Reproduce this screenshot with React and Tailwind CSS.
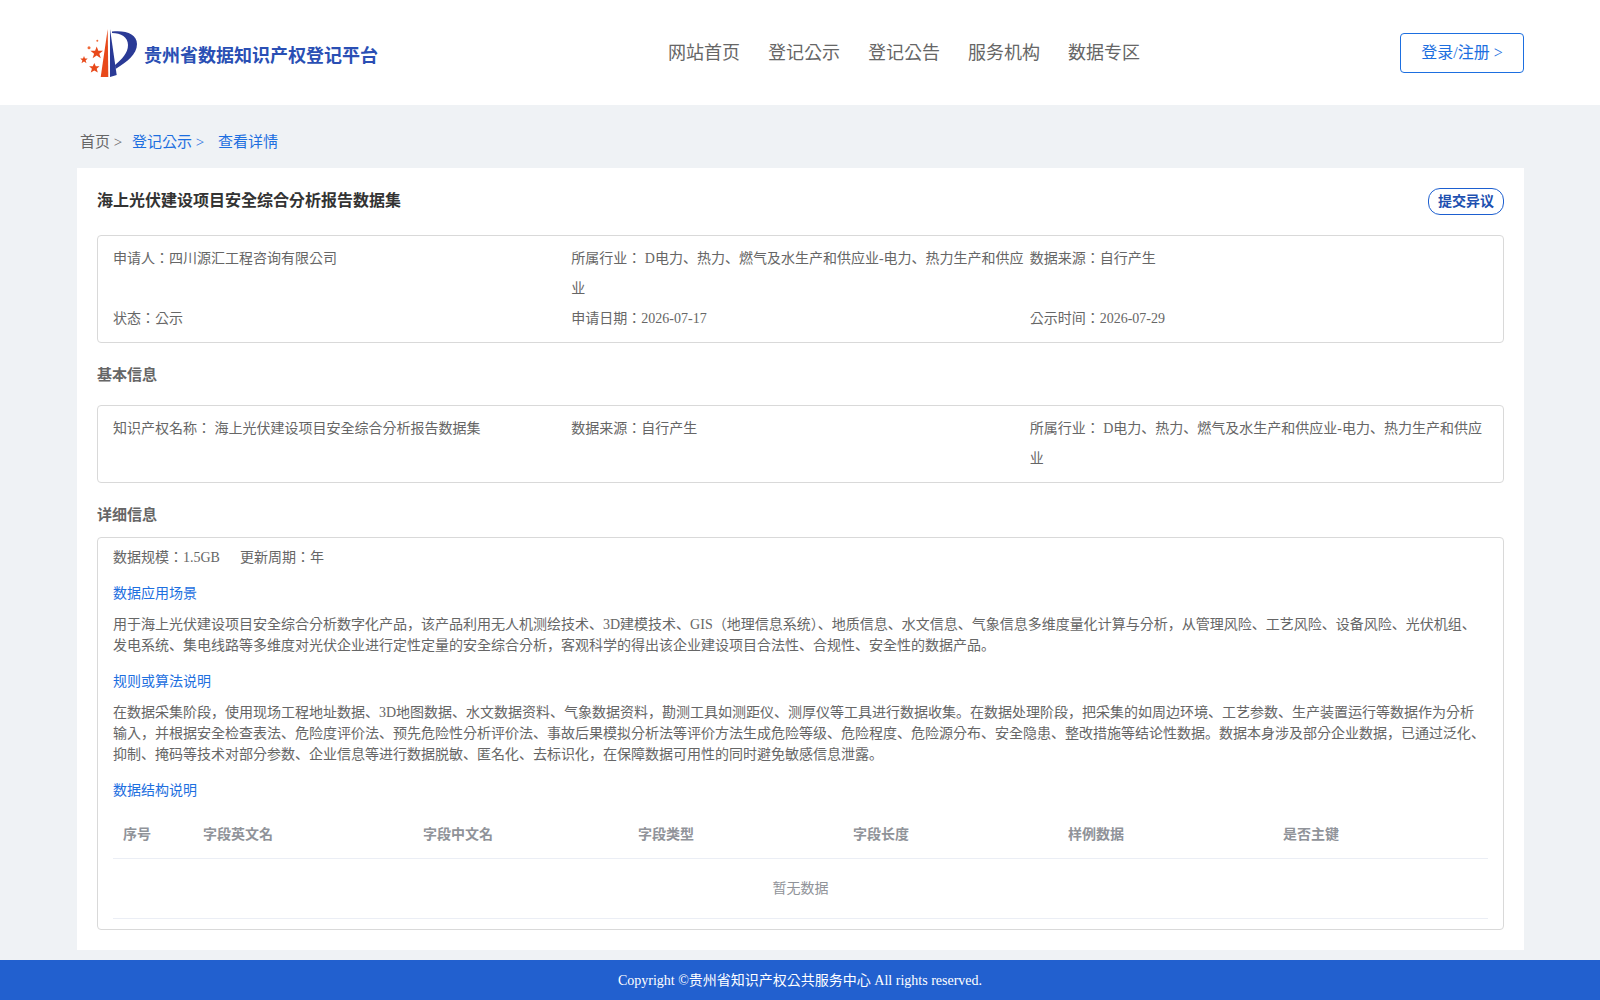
function Logo() {
  return (
    <svg width="60" height="54" viewBox="78 26 60 54" className="shrink-0">
      <path d="M107.7 29 L108.3 77 L100.7 77 Z" fill="#e8491a" />
      <path d="M110 29 L116.7 75 L110 77 Z" fill="#2a3a96" />
      <path d="M112 31.5 C126 30 137 34 137 44 C137 54 127 62 115.5 69 L115 65 C122 59 128 53 128 45 C128 37 121 33 112 33 Z" fill="#2a3a96" />
      <path d="M96.7 46.5 L98.3 50.8 L103 50.8 L99.3 53.7 L100.8 58.3 L96.7 55.6 L92.6 58.3 L94.1 53.7 L90.4 50.8 L95.1 50.8 Z" fill="#e8491a" />
      <path d="M84 56 L85 58.6 L87.7 58.6 L85.6 60.4 L86.5 63.2 L84 61.6 L81.5 63.2 L82.4 60.4 L80.3 58.6 L83 58.6 Z" fill="#e8491a" />
      <path d="M94.3 63 L95.8 66.3 L99.5 66.3 L96.7 68.8 L97.8 72.5 L94.3 70.4 L90.8 72.5 L91.9 68.8 L89.1 66.3 L92.8 66.3 Z" fill="#e8491a" />
      <circle cx="89" cy="47.7" r="1.5" fill="#ef6a3a" />
      <circle cx="97.3" cy="40.7" r="1" fill="#ef6a3a" />
    </svg>
  );
}

const navItems = ["网站首页", "登记公示", "登记公告", "服务机构", "数据专区"];
const columns = [
  { name: "序号", width: "w-[80px]" },
  { name: "字段英文名", width: "w-[220px]" },
  { name: "字段中文名", width: "w-[215px]" },
  { name: "字段类型", width: "w-[215px]" },
  { name: "字段长度", width: "w-[215px]" },
  { name: "样例数据", width: "w-[215px]" },
  { name: "是否主键", width: "" },
];

function SectionLink({ children, className }) {
  return <div className={`text-[14px] leading-[21px] text-[#1d6fe0] ${className}`}>{children}</div>;
}

export default function App() {
  return (
    <div className="h-[1000px] flex flex-col overflow-hidden bg-[#eff2f5] font-['Liberation_Serif','Noto_Sans_CJK_KR',serif] text-[14px] text-[#666]">
      {/* header */}
      <header className="h-[105px] shrink-0 bg-white pl-[78px] pr-[76px] flex items-start">
        <div className="flex items-center gap-[6px] pt-[26px] w-[590px]">
          <Logo />
          <span className="text-[18px] leading-[28px] font-bold text-[#2a4fb4] whitespace-nowrap pt-[5px]">贵州省数据知识产权登记平台</span>
        </div>
        <nav className="flex flex-1 gap-[28px] pt-[39px]">
          {navItems.map((item) => (
            <a key={item} className="text-[18px] leading-[28px] text-[#666]">{item}</a>
          ))}
        </nav>
        <button className="mt-[33px] w-[124px] h-[40px] border border-[#1d6fe0] rounded-[4px] text-[16px] text-[#1d6fe0]">
          登录/注册 &gt;
        </button>
      </header>

      {/* breadcrumb */}
      <div className="h-[63px] shrink-0 pl-[80px] pt-[26px] text-[15px] leading-[22px] flex whitespace-nowrap">
        <span className="text-[#666] w-[52px]">首页 &gt;</span>
        <span className="text-[#1d6fe0] w-[86px]">登记公示 &gt;</span>
        <span className="text-[#1d6fe0]">查看详情</span>
      </div>

      {/* card */}
      <main className="w-[1447px] h-[782px] shrink-0 ml-[77px] bg-white px-[20px] pt-[20px]">
        <div className="flex items-start justify-between h-[47px]">
          <h1 className="text-[16px] leading-[24px] font-bold text-[#333] pt-[1px]">海上光伏建设项目安全综合分析报告数据集</h1>
          <button className="w-[76px] h-[27px] border border-[#1d5fd0] rounded-[12px] text-[14px] font-bold text-[#1d50b0]">提交异议</button>
        </div>

        <div className="border border-[#d9d9d9] rounded-[4px] h-[108px] px-[15px] pt-[8px] grid grid-cols-3 auto-rows-min leading-[30px]">
          <div>申请人：四川源汇工程咨询有限公司</div>
          <div>所属行业： D电力、热力、燃气及水生产和供应业-电力、热力生产和供应业</div>
          <div>数据来源：自行产生</div>
          <div>状态：公示</div>
          <div>申请日期：2026-07-17</div>
          <div>公示时间：2026-07-29</div>
        </div>

        <h2 className="mt-[20px] h-[42px] text-[15px] leading-[22px] font-bold text-[#666] pt-[1px]">基本信息</h2>

        <div className="border border-[#d9d9d9] rounded-[4px] h-[78px] px-[15px] pt-[8px] grid grid-cols-3 auto-rows-min leading-[30px]">
          <div>知识产权名称： 海上光伏建设项目安全综合分析报告数据集</div>
          <div>数据来源：自行产生</div>
          <div>所属行业： D电力、热力、燃气及水生产和供应业-电力、热力生产和供应业</div>
        </div>

        <h2 className="mt-[21px] h-[33px] text-[15px] leading-[22px] font-bold text-[#666]">详细信息</h2>

        <div className="border border-[#d9d9d9] rounded-[4px] h-[393px] px-[15px] pt-[9px]">
          <div className="leading-[21px] flex gap-[20px]">
            <span>数据规模：1.5GB</span>
            <span>更新周期：年</span>
          </div>
          <SectionLink className="mt-[15px]">数据应用场景</SectionLink>
          <p className="mt-[10px] leading-[21px]">
            用于海上光伏建设项目安全综合分析数字化产品，该产品利用无人机测绘技术、3D建模技术、GIS（地理信息系统）、地质信息、水文信息、气象信息多维度量化计算与分析，从管理风险、工艺风险、设备风险、光伏机组、发电系统、集电线路等多维度对光伏企业进行定性定量的安全综合分析，客观科学的得出该企业建设项目合法性、合规性、安全性的数据产品。
          </p>
          <SectionLink className="mt-[15px]">规则或算法说明</SectionLink>
          <p className="mt-[10px] leading-[21px]">
            在数据采集阶段，使用现场工程地址数据、3D地图数据、水文数据资料、气象数据资料，勘测工具如测距仪、测厚仪等工具进行数据收集。在数据处理阶段，把采集的如周边环境、工艺参数、生产装置运行等数据作为分析输入，并根据安全检查表法、危险度评价法、预先危险性分析评价法、事故后果模拟分析法等评价方法生成危险等级、危险程度、危险源分布、安全隐患、整改措施等结论性数据。数据本身涉及部分企业数据，已通过泛化、抑制、掩码等技术对部分参数、企业信息等进行数据脱敏、匿名化、去标识化，在保障数据可用性的同时避免敏感信息泄露。
          </p>
          <SectionLink className="mt-[15px]">数据结构说明</SectionLink>
          <table className="w-full table-fixed mt-[10px] border-collapse">
            <thead>
              <tr className="h-[47px] border-b border-[#ebeef5]">
                {columns.map((c) => (
                  <th key={c.name} className={`${c.width} pl-[10px] pt-[1px] text-left text-[14px] font-bold text-[#909399]`}>{c.name}</th>
                ))}
              </tr>
            </thead>
            <tbody>
              <tr className="h-[60px] border-b border-[#ebeef5]">
                <td colSpan={7} className="pt-[1px] text-center text-[#909399]">暂无数据</td>
              </tr>
            </tbody>
          </table>
        </div>
      </main>

      {/* footer */}
      <footer className="mt-[10px] h-[40px] shrink-0 bg-[#2260cf] text-white flex items-center justify-center text-[14px] pt-[1px]">
        Copyright ©贵州省知识产权公共服务中心 All rights reserved.
      </footer>
    </div>
  );
}
